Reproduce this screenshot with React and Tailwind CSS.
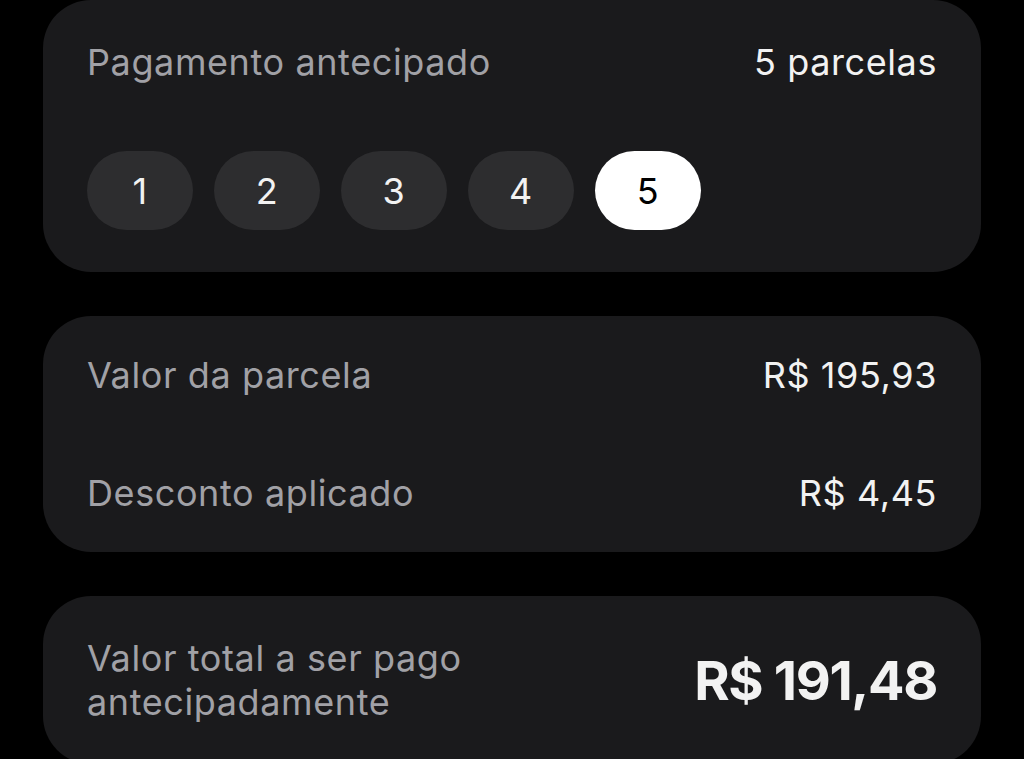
const parcelas = [1, 2, 3, 4, 5]

function Card({ children, className = '' }) {
  return (
    <div className={`rounded-[48px] bg-[#1a1a1c] px-[44px] ${className}`}>
      {children}
    </div>
  )
}

export default function App() {
  const selecionada = 5

  return (
    <div
      className="flex min-h-screen flex-col gap-[44px] bg-black px-[43px] pb-10 tracking-[0.6px]"
      style={{ fontFamily: 'Inter, "Noto Sans", sans-serif' }}
    >
      <Card className="pt-[42px] pb-[42px]">
        <div className="flex h-[40px] items-center justify-between text-[36px]">
          <span className="text-[#a1a1a6]">Pagamento antecipado</span>
          <span className="text-[#f2f2f2]">{selecionada} parcelas</span>
        </div>
        <div className="mt-[69px] flex gap-[21px]">
          {parcelas.map((n) => (
            <button
              key={n}
              type="button"
              className={`flex h-[79px] w-[106px] items-center justify-center rounded-full text-[36px] ${
                n === selecionada ? 'bg-white text-black' : 'bg-[#2d2d2f] text-[#f2f2f2]'
              }`}
            >
              {n}
            </button>
          ))}
        </div>
      </Card>

      <Card className="flex flex-col gap-[78px] py-[39px]">
        <div className="flex h-[40px] items-center justify-between text-[36px]">
          <span className="text-[#a1a1a6]">Valor da parcela</span>
          <span className="text-[#f2f2f2]">R$ 195,93</span>
        </div>
        <div className="flex h-[40px] items-center justify-between text-[36px]">
          <span className="text-[#a1a1a6]">Desconto aplicado</span>
          <span className="text-[#f2f2f2]">R$ 4,45</span>
        </div>
      </Card>

      <Card className="py-[40px]">
        <div className="flex items-center justify-between">
          <span className="text-[36px] leading-[44px] text-[#a1a1a6]">
            Valor total a ser pago
            <br />
            antecipadamente
          </span>
          <span className="text-[54px] font-bold tracking-tight text-[#f2f2f2]">R$ 191,48</span>
        </div>
      </Card>
    </div>
  )
}
